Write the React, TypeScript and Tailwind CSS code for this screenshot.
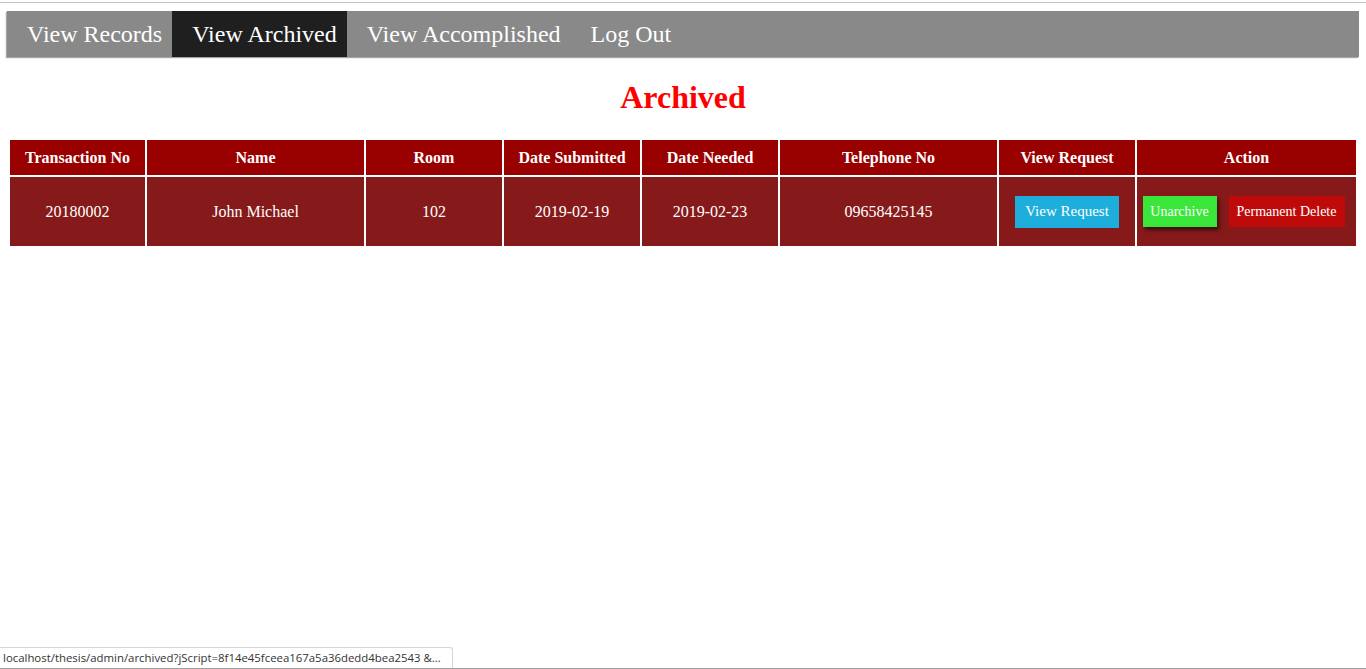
import React from "react";

const NAV = ["View Records", "View Archived", "View Accomplished", "Log Out"];

const COLS: { label: string; w: string }[] = [
  { label: "Transaction No", w: "w-[135px]" },
  { label: "Name", w: "w-[217px]" },
  { label: "Room", w: "w-[136px]" },
  { label: "Date Submitted", w: "w-[136px]" },
  { label: "Date Needed", w: "w-[136px]" },
  { label: "Telephone No", w: "w-[217px]" },
  { label: "View Request", w: "w-[136px]" },
  { label: "Action", w: "w-[219px]" },
];

const ROW = ["20180002", "John Michael", "102", "2019-02-19", "2019-02-23", "09658425145"];

export default function App() {
  return (
    <div
      className="relative h-[669px] overflow-hidden bg-white text-black"
      style={{ fontFamily: '"Liberation Serif", "Times New Roman", serif' }}
    >
      <div className="mt-[2px] h-px bg-[#c4c4c4]" />

      <nav className="mx-[7px] mt-[8px] flex h-[46px] items-stretch bg-[#898989] shadow-[-1px_1px_1px_rgba(0,0,0,0.35)]">
        {NAV.map((item) => {
          const active = item === "View Archived";
          return (
            <a
              key={item}
              href="#"
              className={`flex items-center pl-5 pr-[10px] text-[24px] leading-none text-white ${
                active ? "bg-[#1f1f1f]" : ""
              }`}
            >
              {item}
            </a>
          );
        })}
      </nav>

      <h1 className="mt-[22px] text-center text-[32px] font-bold leading-[37px] text-[#ff0000]">
        Archived
      </h1>

      <table className="mx-[8px] mt-[22px] w-[1350px] border-separate border-spacing-[2px] text-white">
        <thead>
          <tr className="h-[35px] bg-[#990000]">
            {COLS.map((c) => (
              <th key={c.label} className={`${c.w} p-0 text-center text-[16px] font-bold`}>
                {c.label}
              </th>
            ))}
          </tr>
        </thead>
        <tbody>
          <tr className="h-[69px] bg-[#861a1a]">
            {ROW.map((v, i) => (
              <td key={i} className="p-0 text-center text-[16px]">
                {v}
              </td>
            ))}
            <td className="p-0 text-center">
              <button
                type="button"
                className="h-[32px] w-[104px] bg-[#1daedb] text-[15px] text-white"
              >
                View Request
              </button>
            </td>
            <td className="p-0">
              <div className="flex items-center justify-center gap-3 pr-[6px]">
                <button
                  type="button"
                  className="h-[31px] w-[74px] bg-[#3ae63a] text-[14px] text-white shadow-[2px_3px_4px_rgba(0,0,0,0.6)]"
                >
                  Unarchive
                </button>
                <button
                  type="button"
                  className="h-[31px] w-[116px] bg-[#bf0a0a] text-[14px] text-white"
                >
                  Permanent Delete
                </button>
              </div>
            </td>
          </tr>
        </tbody>
      </table>

      <div
        className="absolute bottom-px left-0 flex h-[21px] w-[453px] items-center overflow-hidden whitespace-nowrap rounded-tr-[3px] border-t border-r border-[#d6d6d6] bg-white pl-[3px] text-[11.4px] text-[#333]"
        style={{ fontFamily: '"Open Sans", "DejaVu Sans", sans-serif' }}
      >
        localhost/thesis/admin/archived?jScript=8f14e45fceea167a5a36dedd4bea2543 &amp;...
      </div>
      <div className="absolute bottom-0 left-0 h-px w-full bg-[#a0a0a0]" />
    </div>
  );
}
